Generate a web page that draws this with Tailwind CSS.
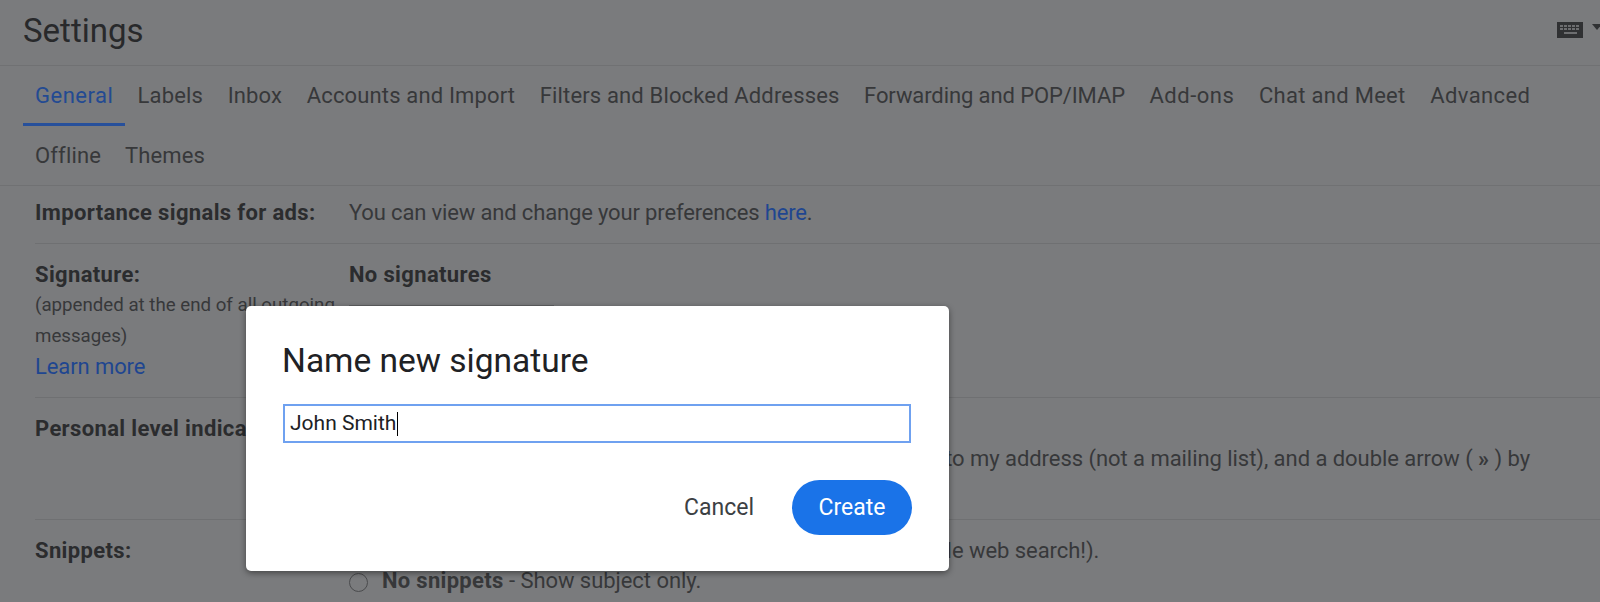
<!DOCTYPE html>
<html>
<head>
<meta charset="utf-8">
<script src="https://cdn.jsdelivr.net/npm/@tailwindcss/browser@4"></script>
</head>
<body class="m-0 overflow-hidden bg-[#7a7b7d]">
<div class="relative h-[602px] w-[1600px] overflow-hidden font-['Roboto',sans-serif] text-[22px] text-[#37383a]">
  <header class="flex h-[66px] items-center justify-between border-b border-[#707173]">
    <h1 class="ml-[23px] mb-[4px] text-[33px] font-normal leading-none text-[#28292b]">Settings</h1>
    <div class="mb-[6px] flex items-start gap-[9px]">
      <svg width="26" height="16" viewBox="0 0 26 16" class="block"><rect width="26" height="16" fill="#303133"/><g fill="#6d6e70"><rect x="3" y="3" width="3" height="2"/><rect x="7" y="3" width="3" height="2"/><rect x="11" y="3" width="3" height="2"/><rect x="15" y="3" width="3" height="2"/><rect x="19" y="3" width="3" height="2"/><rect x="3" y="6" width="3" height="2"/><rect x="7" y="6" width="3" height="2"/><rect x="11" y="6" width="3" height="2"/><rect x="15" y="6" width="3" height="2"/><rect x="19" y="6" width="3" height="2"/><rect x="7" y="10" width="13" height="2"/></g></svg>
      <svg width="8" height="8" viewBox="0 0 8 8" class="mt-[2px] shrink-0"><path d="M0 0h10L5 6z" fill="#303133"/></svg>
    </div>
  </header>
  <nav class="flex h-[60px] items-start pl-[23px] pt-[15px] tracking-[0.15px]">
    <a class="h-[45px] border-b-[3px] border-[#27509b] px-[12px] leading-[30px] tracking-[0.5px] text-[#234a92]">General</a>
    <a class="px-[12.3px] leading-[30px]">Labels</a>
    <a class="px-[12.3px] leading-[30px]">Inbox</a>
    <a class="px-[12.3px] leading-[30px]">Accounts and Import</a>
    <a class="px-[12.3px] leading-[30px]">Filters and Blocked Addresses</a>
    <a class="px-[12.3px] leading-[30px] tracking-[-0.1px]">Forwarding and POP/IMAP</a>
    <a class="px-[12.3px] leading-[30px] tracking-[0.5px]">Add-ons</a>
    <a class="px-[12.3px] leading-[30px] tracking-[0.3px]">Chat and Meet</a>
    <a class="px-[12.3px] leading-[30px] tracking-[0.4px]">Advanced</a>
  </nav>
  <nav class="flex h-[60px] items-start border-b border-[#707173] pl-[23px] pt-[15px] tracking-[0.15px]">
    <a class="px-[12px] leading-[30px]">Offline</a>
    <a class="px-[12px] leading-[30px]">Themes</a>
  </nav>
  <main class="pl-[35px]">
    <section class="flex h-[58px] items-center border-b border-[#6f7072] pb-[5px]">
      <b class="w-[314px] shrink-0 font-bold tracking-[0.35px] text-[#2b2c2e]">Importance signals for ads:</b>
      <p class="tracking-[-0.15px]">You can view and change your preferences <a class="text-[#1f4690]">here</a>.</p>
    </section>
    <section class="flex h-[154px] border-b border-[#6f7072] pt-[15px]">
      <div class="w-[314px] shrink-0 leading-[31px]">
        <b class="block font-bold tracking-[0.35px] text-[#2b2c2e]">Signature:</b>
        <p class="text-[18.7px]">(appended at the end of all outgoing messages)</p>
        <a class="-mt-[1px] block text-[#1f4690] tracking-[-0.1px]">Learn more</a>
      </div>
      <div>
        <b class="block font-bold leading-[31px] tracking-[0.35px] text-[#2b2c2e]">No signatures</b>
        <div class="mt-[15px] h-[40px] w-[205px] border-t border-[#5f6062]"></div>
      </div>
    </section>
    <section class="flex h-[122px] border-b border-[#6f7072] pt-[15px]">
      <b class="w-[314px] shrink-0 font-bold leading-[31px] tracking-[0.35px] text-[#2b2c2e]">Personal level indicators:</b>
      <div class="min-w-0 flex-1 pr-[70px] pt-[30px] leading-[31px]">
        <p class="text-right whitespace-nowrap tracking-[-0.05px]">Show indicators - Display an arrow ( › ) by messages sent to my address (not a mailing list), and a double arrow ( <b>»</b> ) by</p>
      </div>
    </section>
    <section class="flex pt-[15px]">
      <b class="w-[314px] shrink-0 font-bold leading-[31px] tracking-[0.35px] text-[#2b2c2e]">Snippets:</b>
      <div class="leading-[31px] tracking-[-0.05px]">
        <p class="flex items-center gap-[16px]"><span class="size-[19px] rounded-full border border-[#4a4b4d]"></span><span>Show snippets - Show snippets of the message (like Google web search!).</span></p>
        <p class="flex items-center gap-[14px]"><span class="mt-[3px] size-[19px] rounded-full border border-[#4a4b4d]"></span><span class="-mt-[1px]"><b class="font-bold tracking-[0.3px]">No snippets</b> - Show subject only.</span></p>
      </div>
    </section>
  </main>

  <div role="dialog" class="absolute left-[246px] top-[306px] h-[265px] w-[703px] rounded-[5px] bg-white pl-[37px] shadow-[0_2px_6px_rgba(0,0,0,0.45)]">
    <h2 class="-ml-[1px] pt-[35px] text-[33.5px] font-normal leading-[40px] text-[#202124]">Name new signature</h2>
    <div class="mt-[23px] flex h-[39px] w-[628px] items-center border-2 border-[#6fa1f0] pl-[5px] text-[21px] text-[#202124]">John Smith<span class="ml-[1px] h-[24px] w-px bg-black"></span></div>
    <div class="mt-[37px] flex h-[55px] items-center justify-end pr-[37px]">
      <span class="mr-[38px] pt-[1px] text-[23px] text-[#3c4043]">Cancel</span>
      <span class="flex h-[55px] w-[120px] items-center justify-center rounded-full bg-[#1a73e8] pt-[1px] text-[23px] text-white">Create</span>
    </div>
  </div>
</div>
</body>
</html>
